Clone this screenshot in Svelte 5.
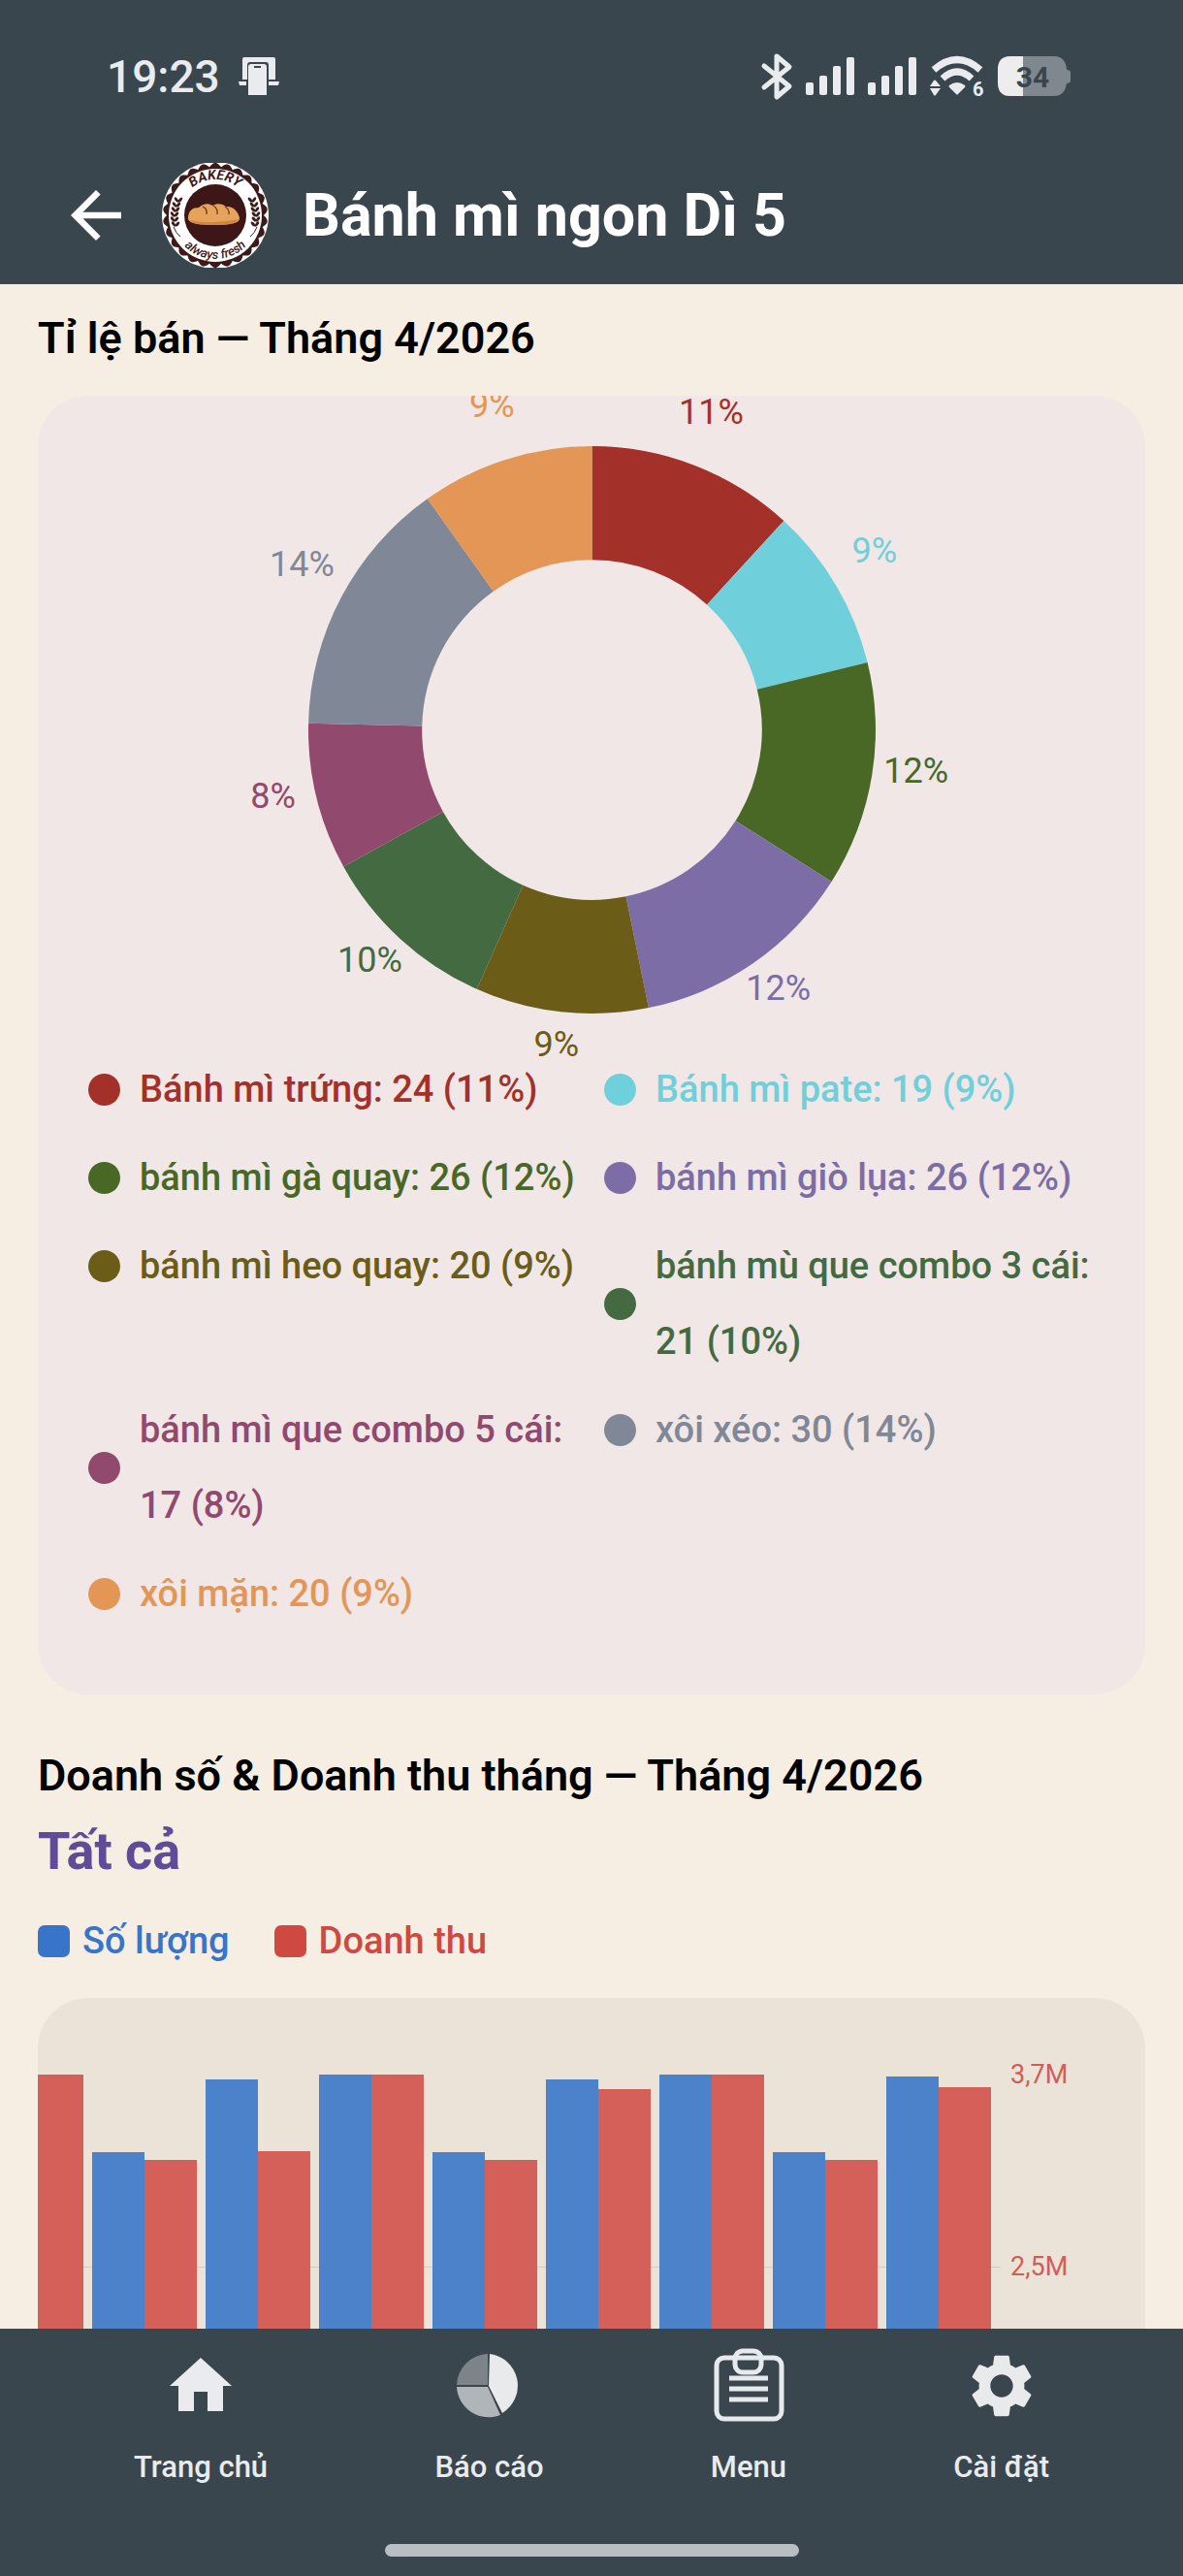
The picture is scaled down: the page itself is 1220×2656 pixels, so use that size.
<script lang="ts">
  type Product = { name: string; sold: number; percent: number; color: string };
  type Day = { quantity: number; revenue: number };

  const products: Product[] = [
    { name: 'Bánh mì trứng', sold: 24, percent: 11, color: '#a43129' },
    { name: 'Bánh mì pate', sold: 19, percent: 9, color: '#6fd0db' },
    { name: 'bánh mì gà quay', sold: 26, percent: 12, color: '#496825' },
    { name: 'bánh mì giò lụa', sold: 26, percent: 12, color: '#7c6da6' },
    { name: 'bánh mì heo quay', sold: 20, percent: 9, color: '#6b5c18' },
    { name: 'bánh mù que combo 3 cái', sold: 21, percent: 10, color: '#446a42' },
    { name: 'bánh mì que combo 5 cái', sold: 17, percent: 8, color: '#91496d' },
    { name: 'xôi xéo', sold: 30, percent: 14, color: '#808796' },
    { name: 'xôi mặn', sold: 20, percent: 9, color: '#e49656' }
  ];

  // Bar heights in percent of the largest value
  const days: Day[] = [
    { quantity: 100, revenue: 100 },
    { quantity: 86.6, revenue: 85.2 },
    { quantity: 99.1, revenue: 86.7 },
    { quantity: 100, revenue: 100 },
    { quantity: 86.6, revenue: 85.2 },
    { quantity: 99.1, revenue: 97.5 },
    { quantity: 100, revenue: 100 },
    { quantity: 86.6, revenue: 85.2 },
    { quantity: 99.6, revenue: 97.8 }
  ];

  const OUTER = 292;
  const INNER = 175;
  const LABEL = 338;

  function point(radius: number, angle: number) {
    return { x: radius * Math.sin(angle), y: -radius * Math.cos(angle) };
  }

  const total = products.reduce((sum, p) => sum + p.sold, 0);

  const slices = products.map((product, i) => {
    const before = products.slice(0, i).reduce((sum, p) => sum + p.sold, 0);
    const start = (before / total) * Math.PI * 2;
    const end = ((before + product.sold) / total) * Math.PI * 2;
    const a = point(OUTER, start);
    const b = point(OUTER, end);
    const c = point(INNER, end);
    const d = point(INNER, start);
    return {
      ...product,
      path: `M${a.x} ${a.y}A${OUTER} ${OUTER} 0 0 1 ${b.x} ${b.y}L${c.x} ${c.y}A${INNER} ${INNER} 0 0 0 ${d.x} ${d.y}Z`,
      label: point(LABEL, (start + end) / 2)
    };
  });

  // Wavy rim of the shop logo
  const rim = Array.from({ length: 360 }, (_, i) => {
    const t = (i / 180) * Math.PI;
    const r = 50 + 4 * Math.abs(Math.cos(13 * t));
    return `${(55 + r * Math.sin(t)).toFixed(2)},${(54 - r * Math.cos(t)).toFixed(2)}`;
  }).join(' ');

  // Wheat ear, drawn once and mirrored
  const grains = [
    { x: 12, y: 63 },
    { x: 11, y: 58 },
    { x: 11, y: 53 },
    { x: 12, y: 48 },
    { x: 13, y: 43 },
    { x: 15, y: 38 }
  ];
</script>

{#snippet signal()}
  <svg width="50" height="40" viewBox="0 0 50 40" fill="#e9ebef" aria-hidden="true">
    <rect x="0" y="26" width="8" height="13" rx="2" />
    <rect x="14" y="19" width="8" height="20" rx="2" />
    <rect x="28" y="9" width="8" height="30" rx="2" />
    <rect x="42" y="0" width="8" height="39" rx="2" />
  </svg>
{/snippet}

{#snippet wheat()}
  {#each grains as grain}
    <ellipse cx={grain.x} cy={grain.y} rx="3" ry="1.5" transform="rotate(55 {grain.x} {grain.y})" />
    <ellipse cx={grain.x + 4} cy={grain.y} rx="3" ry="1.5" transform="rotate(-50 {grain.x + 4} {grain.y})" />
  {/each}
  <path d="M12 66q2 6 7 10" fill="none" stroke="#3d1a1a" />
{/snippet}

<div class="app">
  <header>
    <div class="status-bar">
      <span class="time">19:23</span>
      <svg width="42" height="40" viewBox="0 0 42 40" aria-hidden="true">
        <path d="M4 2q0-2 2-2h30q2 0 2 2v21h-7V8q0-3-3-3H12q-3 0-3 3v15H4z" fill="#e9ebef" />
        <path d="M0 25h8v4H1zM31 25h11l-1 4H31z" fill="#e9ebef" />
        <path d="M10 10q0-3 3-3h13q3 0 3 3v29H10z" fill="#e9ebef" />
        <rect x="16" y="9" width="7" height="2" fill="#3a464d" />
      </svg>
      <div class="status-icons">
        <svg width="32" height="48" viewBox="0 0 32 48" fill="none" stroke="#e9ebef" stroke-width="5" stroke-linecap="round" stroke-linejoin="round" aria-hidden="true">
          <path d="M3 13L29 34L16 45V3L29 14L3 35" />
        </svg>
        {@render signal()}
        {@render signal()}
        <svg width="56" height="42" viewBox="0 0 56 42" aria-hidden="true">
          <path d="M4 14Q28-7 52 14" fill="none" stroke="#e9ebef" stroke-width="7" />
          <path d="M13 23Q28 9 43 23" fill="none" stroke="#e9ebef" stroke-width="7" />
          <path d="M20 30q8-6 16 0q1 1 0 2l-7 7q-1 1-2 0l-7-7q-1-1 0-2z" fill="#e9ebef" />
          <path d="M0 31l4-6q1-1 2 0l5 6zM0 33h11l-5 7q-1 1-2 0z" fill="#e9ebef" />
          <text x="44" y="41" class="wifi-gen">6</text>
        </svg>
        <svg width="75" height="42" viewBox="0 0 75 42" aria-hidden="true">
          <path d="M13 0H58Q70 0 71 14Q75 14 75 17V25Q75 28 71 28Q69 41 58 41H13Q0 41 0 27V14Q0 0 13 0Z" fill="#80888f" />
          <path d="M13 0H26V41H13Q0 41 0 27V14Q0 0 13 0Z" fill="#ededee" />
          <text x="36" y="32" class="battery-level">34</text>
        </svg>
      </div>
    </div>

    <div class="toolbar">
      <button class="back" aria-label="Quay lại">
        <svg width="78" height="78" viewBox="0 0 24 24" fill="#fff" aria-hidden="true">
          <path d="M20 11H7.83l5.59-5.59L12 4l-8 8 8 8 1.41-1.41L7.83 13H20v-2z" />
        </svg>
      </button>
      <svg class="logo" width="110" height="108" viewBox="0 0 110 108" aria-hidden="true">
        <defs>
          <path id="arc-top" d="M18 54A37 37 0 0 1 92 54" />
          <path id="arc-bottom" d="M10 54A45 45 0 0 0 100 54" />
        </defs>
        <circle cx="55" cy="54" r="55" fill="#fff" />
        <polygon points={rim} fill="#3d1a1a" />
        <circle cx="55" cy="54" r="48" fill="#fff" />
        <circle cx="55" cy="54" r="32" fill="#3d1717" />
        <path d="M27 57C27 49 32 46 38 46C42 42 48 41 52 44C57 41 63 42 66 45C73 44 79 50 80 57C80 61 75 64 53 64C33 64 27 61 27 57Z" fill="#e6a35b" />
        <path d="M28 59Q53 64 79 58Q76 64 53 64Q31 64 28 59Z" fill="#cf8642" />
        <path d="M42 45q5 2 4 8M53 44q5 3 4 9M65 45q5 3 4 8" fill="none" stroke="#7a4020" stroke-width="1.4" />
        <g fill="#3d1a1a">{@render wheat()}</g>
        <g fill="#3d1a1a" transform="translate(110 0) scale(-1 1)">{@render wheat()}</g>
        <text class="logo-top"><textPath href="#arc-top" startOffset="50%">BAKERY</textPath></text>
        <text class="logo-bottom"><textPath href="#arc-bottom" startOffset="50%">always fresh</textPath></text>
      </svg>
      <h1>Bánh mì ngon Dì 5</h1>
    </div>
  </header>

  <main>
    <section>
      <h2>Tỉ lệ bán — Tháng 4/2026</h2>
      <div class="card ratio-card">
        <svg class="donut" viewBox="-292 -292 584 584" role="img" aria-label="Tỉ lệ bán">
          {#each slices as slice}
            <path d={slice.path} fill={slice.color} />
            <text x={slice.label.x} y={slice.label.y} fill={slice.color}>{slice.percent}%</text>
          {/each}
        </svg>
        <ul class="products">
          {#each products as product}
            <li style="color: {product.color}">
              <span class="dot"></span>
              <span>{product.name}: {product.sold} ({product.percent}%)</span>
            </li>
          {/each}
        </ul>
      </div>
    </section>

    <section class="sales">
      <h2>Doanh số &amp; Doanh thu tháng — Tháng 4/2026</h2>
      <h3>Tất cả</h3>
      <div class="series">
        <span class="key quantity-key"><i></i>Số lượng</span>
        <span class="key revenue-key"><i></i>Doanh thu</span>
      </div>
      <div class="card sales-card">
        <div class="plot">
          <div class="gridline"></div>
          {#each days as day}
            <div class="day">
              <div class="bar quantity" style="height: {day.quantity}%"></div>
              <div class="bar revenue" style="height: {day.revenue}%"></div>
            </div>
          {/each}
        </div>
        <div class="axis">
          <span>3,7M</span>
          <span>2,5M</span>
        </div>
      </div>
    </section>
  </main>

  <nav>
    <div class="tabs">
      <a href="#home">
        <svg width="78" height="78" viewBox="0 0 78 78" fill="#e9ebee" aria-hidden="true">
          <path d="M39 10L71 39H62V65H46V45H32V65H16V39H7Z" />
        </svg>
        Trang chủ
      </a>
      <a href="#report">
        <svg width="78" height="78" viewBox="0 0 78 78" aria-hidden="true">
          <path d="M40 6A33 33 0 0 1 53 67L39 39Z" fill="#e9eaec" />
          <path d="M51 69A33 33 0 0 1 6 40H38Z" fill="#b0b5b9" />
          <path d="M6 38A33 33 0 0 1 38 6V38Z" fill="#7c848a" />
        </svg>
        Báo cáo
      </a>
      <a href="#menu">
        <svg width="78" height="78" viewBox="0 0 78 78" fill="none" stroke="#e6e9ee" stroke-width="5" aria-hidden="true">
          <rect x="6" y="10" width="67" height="63" rx="8" />
          <rect x="25" y="3" width="27" height="22" rx="8" />
          <path d="M19 31H59M19 42H59M19 53H59" />
        </svg>
        Menu
      </a>
      <a href="#settings">
        <svg width="78" height="78" viewBox="0 0 24 24" fill="#e9eaec" aria-hidden="true">
          <path d="M19.14 12.94c.04-.3.06-.61.06-.94 0-.32-.02-.64-.07-.94l2.03-1.58c.18-.14.23-.41.12-.61l-1.92-3.32c-.12-.22-.37-.29-.59-.22l-2.39.96c-.5-.38-1.03-.7-1.62-.94l-.36-2.54c-.04-.24-.24-.41-.48-.41h-3.84c-.24 0-.43.17-.47.41l-.36 2.54c-.59.24-1.13.57-1.62.94l-2.39-.96c-.22-.08-.47 0-.59.22L2.74 8.87c-.12.21-.08.47.12.61l2.03 1.58c-.05.3-.09.63-.09.94s.02.64.07.94l-2.03 1.58c-.18.14-.23.41-.12.61l1.92 3.32c.12.22.37.29.59.22l2.39-.96c.5.38 1.03.7 1.62.94l.36 2.54c.05.24.24.41.48.41h3.84c.24 0 .44-.17.47-.41l.36-2.54c.59-.24 1.13-.56 1.62-.94l2.39.96c.22.08.47 0 .59-.22l1.92-3.32c.12-.22.07-.47-.12-.61l-2.01-1.58zM12 15.6c-1.98 0-3.6-1.62-3.6-3.6s1.62-3.6 3.6-3.6 3.6 1.62 3.6 3.6-1.62 3.6-3.6 3.6z" />
        </svg>
        Cài đặt
      </a>
    </div>
    <div class="home-indicator"></div>
  </nav>
</div>

<style>
  :global(body) {
    background: #f6eee2;
  }

  .app {
    display: flex;
    flex-direction: column;
    height: 100vh;
    background: #f6eee2;
    color: #000;
    font-family: Roboto, sans-serif;
  }

  header,
  nav {
    flex-shrink: 0;
    background: #3a464d;
  }

  .status-bar {
    display: flex;
    align-items: center;
    gap: 19px;
    height: 157px;
    padding: 0 116px 0 110px;
    box-sizing: border-box;
  }

  .status-bar svg {
    overflow: visible;
  }

  .time {
    color: #e9ebef;
    font-size: 46px;
    font-weight: 500;
    line-height: 54px;
  }

  .status-icons {
    display: flex;
    align-items: center;
    gap: 14px;
    margin-left: auto;
  }

  .wifi-gen {
    fill: #e9ebef;
    font-size: 20px;
    font-weight: 700;
  }

  .battery-level {
    fill: #3a464d;
    font-size: 30px;
    font-weight: 700;
    text-anchor: middle;
  }

  .toolbar {
    display: flex;
    align-items: center;
    height: 130px;
    padding: 0 60px 6px;
  }

  .back {
    display: flex;
    padding: 0;
    border: 0;
    background: none;
    cursor: pointer;
  }

  .logo {
    margin: 0 35px 0 29px;
  }

  .logo-top,
  .logo-bottom {
    fill: #3d1a1a;
    font-style: italic;
    text-anchor: middle;
  }

  .logo-top {
    font-size: 14px;
    font-weight: 700;
  }

  .logo-bottom {
    font-size: 13px;
    font-weight: 500;
  }

  h1,
  h2,
  h3 {
    margin: 0;
    line-height: 78px;
  }

  h1 {
    color: #fff;
    font-size: 61px;
    font-weight: 700;
  }

  h2 {
    font-size: 45px;
    font-weight: 600;
  }

  h3 {
    color: #5f4b97;
    font-size: 54px;
    font-weight: 700;
  }

  main {
    flex: 1;
    min-height: 0;
    padding: 17px 39px 0;
    overflow-y: auto;
    scrollbar-width: none;
  }

  .card {
    border-radius: 52px;
    overflow: hidden;
  }

  .ratio-card {
    margin-top: 20px;
    padding: 52px;
    background: #f0e7e6;
  }

  .donut {
    display: block;
    width: 585px;
    max-width: 100%;
    margin: 0 auto 39px;
    overflow: visible;
  }

  .donut text {
    font-size: 36px;
    text-anchor: middle;
  }

  .products {
    display: grid;
    grid-template-columns: 1fr 1fr;
    column-gap: 26px;
    margin: 0;
    padding: 0;
    list-style: none;
  }

  .products li {
    display: flex;
    align-items: center;
    align-self: start;
    gap: 20px;
    margin-bottom: 13px;
    font-size: 38px;
    font-weight: 500;
    line-height: 78px;
  }

  .dot {
    flex-shrink: 0;
    width: 33px;
    height: 33px;
    border-radius: 50%;
    background: currentColor;
  }

  .sales {
    margin-top: 45px;
  }

  .series {
    display: flex;
    gap: 46px;
    margin: 14px 0 20px;
  }

  .key {
    display: flex;
    align-items: center;
    gap: 13px;
    font-size: 38px;
    font-weight: 500;
    line-height: 78px;
  }

  .key i {
    width: 33px;
    height: 33px;
    border-radius: 7px;
    background: currentColor;
  }

  .quantity-key {
    color: #3974cb;
  }

  .revenue-key {
    color: #cf4842;
  }

  .sales-card {
    display: flex;
    padding: 79px 0;
    background: #ebe3d7;
  }

  .plot {
    position: relative;
    display: flex;
    flex: 1;
    justify-content: flex-end;
    gap: 9px;
    min-width: 0;
    height: 594px;
    padding-right: 10px;
  }

  .gridline {
    position: absolute;
    top: 198px;
    left: 0;
    right: 0;
    height: 1px;
    background: #d3ccc2;
  }

  .day {
    position: relative;
    display: flex;
    flex-shrink: 0;
    align-items: flex-end;
  }

  .bar {
    width: 54px;
  }

  .quantity {
    background: #4b82ca;
  }

  .revenue {
    background: #d5605a;
  }

  .axis {
    display: flex;
    flex-direction: column;
    gap: 160px;
    width: 139px;
    margin-top: -19px;
    padding-left: 10px;
    color: #cd5f58;
    font-size: 27px;
    line-height: 38px;
  }

  .tabs {
    display: flex;
    justify-content: space-between;
    padding: 20px 138px 0;
  }

  .tabs a {
    display: flex;
    flex-direction: column;
    align-items: center;
    gap: 26px;
    color: #e9ebee;
    font-size: 31px;
    font-weight: 500;
    line-height: 38px;
    text-decoration: none;
  }

  .home-indicator {
    width: 35%;
    height: 13px;
    margin: 60px auto 20px;
    border-radius: 7px;
    background: #b8bec2;
  }
</style>
